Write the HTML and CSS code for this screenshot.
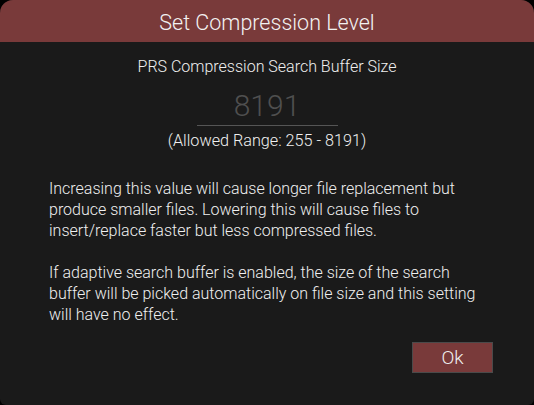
FILE: index.html
```html
<!DOCTYPE html>
<html>
<head>
<meta charset="utf-8">
<link rel="stylesheet" href="styles.css">
</head>
<body>
<div class="dialog">
  <div class="header">Set Compression Level</div>
  <div class="content">
    <div class="label">PRS Compression Search Buffer Size</div>
    <div class="input">8191</div>
    <div class="range">(Allowed Range: 255 - 8191)</div>
    <p class="text">Increasing this value will cause longer file replacement but produce smaller files. Lowering this will cause files to insert/replace faster but less compressed files.</p>
    <p class="text">If adaptive search buffer is enabled, the size of the search buffer will be picked automatically on file size and this setting will have no effect.</p>
    <div class="actions"><button class="ok">Ok</button></div>
  </div>
</div>
</body>
</html>
```
FILE: styles.css
```css
html, body {
  margin: 0;
  padding: 0;
  background: #000;
  width: 534px;
  height: 405px;
  overflow: hidden;
}
.dialog {
  width: 534px;
  height: 405px;
  background: #1a1a1a;
  border-radius: 13px 13px 6px 6px;
  overflow: hidden;
  font-family: Roboto, "Liberation Sans", sans-serif;
  font-weight: 300;
  color: #f0f0f0;
  display: flex;
  flex-direction: column;
}
.header {
  height: 42px;
  background: #793a3a;
  font-size: 21.5px;
  line-height: 45px;
  text-align: center;
  color: #f2f2f2;
}
.content {
  display: flex;
  flex-direction: column;
  padding: 14px 49px 0 49px;
}
.label {
  text-align: center;
  font-size: 16px;
  line-height: 22px;
}
.input {
  align-self: center;
  width: 141px;
  margin-top: 10px;
  padding-bottom: 1px;
  border-bottom: 1px solid #555;
  text-align: center;
  font-size: 30px;
  line-height: 36px;
  color: #4f4f4f;
}
.range {
  text-align: center;
  font-size: 16.2px;
  line-height: 22px;
  margin-top: 4px;
}
.text {
  font-size: 16px;
  line-height: 21px;
  margin: 26px 0 0 0;
}
.text + .text {
  margin-top: 21px;
}
.actions {
  display: flex;
  justify-content: flex-end;
  margin-top: 17px;
  margin-right: -8px;
}
.ok {
  width: 81px;
  height: 31px;
  background: #793a3a;
  border: 1px solid #4a4a4a;
  color: #f0f0f0;
  font-family: Roboto, "Liberation Sans", sans-serif;
  font-weight: 300;
  font-size: 19px;
  padding: 0;
}
```
